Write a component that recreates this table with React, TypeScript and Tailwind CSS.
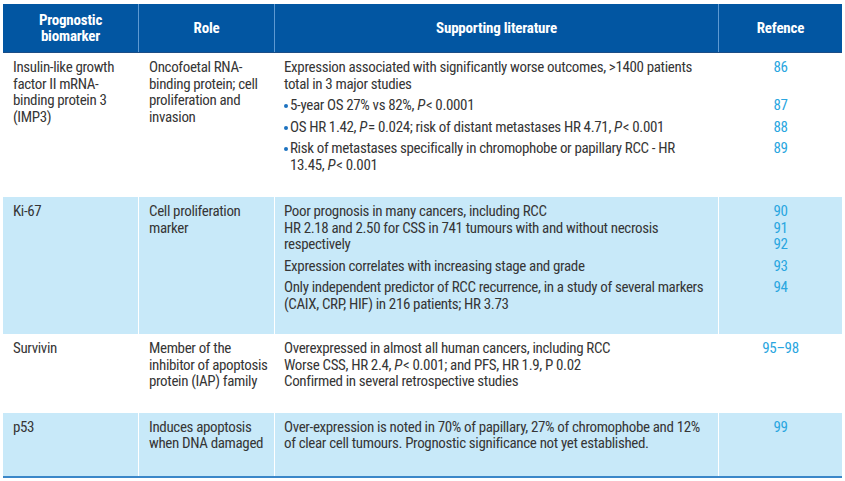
import React from "react";

type Item = {
  lines: React.ReactNode[];
  refs: string[];
  bullet?: boolean;
};

type Row = {
  marker: string[];
  role: string[];
  items: Item[];
  tint: boolean;
  pb: string;
};

const P = () => <i className="pr-[1px]">P</i>;

const rows: Row[] = [
  {
    marker: ["Insulin-like growth", "factor II mRNA-", "binding protein 3", "(IMP3)"],
    role: ["Oncofoetal RNA-", "binding protein; cell", "proliferation and", "invasion"],
    tint: false,
    pb: "pb-[24px]",
    items: [
      {
        lines: [
          "Expression associated with significantly worse outcomes, >1400 patients",
          "total in 3 major studies",
        ],
        refs: ["86"],
      },
      {
        bullet: true,
        lines: [
          <>
            5-year OS 27% vs 82%, <P />&lt; 0.0001
          </>,
        ],
        refs: ["87"],
      },
      {
        bullet: true,
        lines: [
          <>
            OS HR 1.42, <P />= 0.024; risk of distant metastases HR 4.71, <P />&lt; 0.001
          </>,
        ],
        refs: ["88"],
      },
      {
        bullet: true,
        lines: [
          "Risk of metastases specifically in chromophobe or papillary RCC - HR",
          <>
            13.45, <P />&lt; 0.001
          </>,
        ],
        refs: ["89"],
      },
    ],
  },
  {
    marker: ["Ki-67"],
    role: ["Cell proliferation", "marker"],
    tint: true,
    pb: "pb-[22px]",
    items: [
      {
        lines: [
          "Poor prognosis in many cancers, including RCC",
          "HR 2.18 and 2.50 for CSS in 741 tumours with and without necrosis",
          "respectively",
        ],
        refs: ["90", "91", "92"],
      },
      {
        lines: ["Expression correlates with increasing stage and grade"],
        refs: ["93"],
      },
      {
        lines: [
          "Only independent predictor of RCC recurrence, in a study of several markers",
          "(CAIX, CRP, HIF) in 216 patients; HR 3.73",
        ],
        refs: ["94"],
      },
    ],
  },
  {
    marker: ["Survivin"],
    role: ["Member of the", "inhibitor of apoptosis", "protein (IAP) family"],
    tint: false,
    pb: "pb-[23px]",
    items: [
      {
        lines: [
          "Overexpressed in almost all human cancers, including RCC",
          <>
            Worse CSS, HR 2.4, <P />&lt; 0.001; and PFS, HR 1.9, P 0.02
          </>,
          "Confirmed in several retrospective studies",
        ],
        refs: ["95\u201398"],
      },
    ],
  },
  {
    marker: ["p53"],
    role: ["Induces apoptosis", "when DNA damaged"],
    tint: true,
    pb: "pb-[24px]",
    items: [
      {
        lines: [
          "Over-expression is noted in 70% of papillary, 27% of chromophobe and 12%",
          "of clear cell tumours. Prognostic significance not yet established.",
        ],
        refs: ["99"],
      },
    ],
  },
];

const Lines = ({ lines }: { lines: React.ReactNode[] }) => (
  <>
    {lines.map((l, i) => (
      <div key={i} className="h-[16.5px] whitespace-nowrap">
        {l}
      </div>
    ))}
  </>
);

export default function App() {
  return (
    <div
      className="w-[845px] h-[481px] bg-white pl-[3px] pt-[4px] text-[15px] leading-[16.5px] tracking-[-0.35px] text-[#363636] font-stretch-[75%]"
      style={{ fontFamily: '"Roboto Condensed", Roboto, sans-serif' }}
    >
      <div className="w-[839px]">
        {/* header */}
        <div className="grid grid-cols-[135px_136px_444px_124px] h-[49px] bg-[#0256a2] border-b border-[#1b4d86] text-white font-bold tracking-[-0.2px]">
          <div className="flex items-center justify-center text-center">
            Prognostic
            <br />
            biomarker
          </div>
          <div className="flex items-center justify-center border-l border-[#5d99d2]">Role</div>
          <div className="flex items-center justify-center border-l border-[#5d99d2]">Supporting literature</div>
          <div className="flex items-center justify-center border-l border-[#5d99d2]">Refence</div>
        </div>

        {rows.map((row, ri) => (
          <div
            key={ri}
            className={`grid grid-cols-[135px_136px_444px_124px] ${row.tint ? "bg-[#c8e9f9]" : "bg-white"} ${
              ri === rows.length - 1 ? "border-b-2 border-[#3b87c9]" : ""
            }`}
          >
            <div className={`pl-[10px] pt-[6px] ${row.pb}`}>
              <Lines lines={row.marker} />
            </div>
            <div className={`pl-[10px] pt-[6px] ${row.pb} border-l border-white`}>
              <Lines lines={row.role} />
            </div>
            <div className={`pl-[9px] pt-[6px] ${row.pb} border-l border-white`}>
              {row.items.map((it, ii) => (
                <div key={ii} className={`flex ${ii > 0 ? "mt-[5px]" : ""}`}>
                  {it.bullet && (
                    <span className="w-[6px] shrink-0 pt-[7px]">
                      <span className="block w-[4px] h-[4px] rounded-full bg-[#1c72c0]" />
                    </span>
                  )}
                  <div>
                    <Lines lines={it.lines} />
                  </div>
                </div>
              ))}
            </div>
            <div className={`pt-[6px] ${row.pb} border-l border-white text-center text-[#2aa6e0]`}>
              {row.items.map((it, ii) => (
                <div key={ii} className={ii > 0 ? "mt-[5px]" : ""}>
                  <Lines lines={it.lines.map((_, li) => it.refs[li] ?? "\u00a0")} />
                </div>
              ))}
            </div>
          </div>
        ))}
      </div>
    </div>
  );
}
